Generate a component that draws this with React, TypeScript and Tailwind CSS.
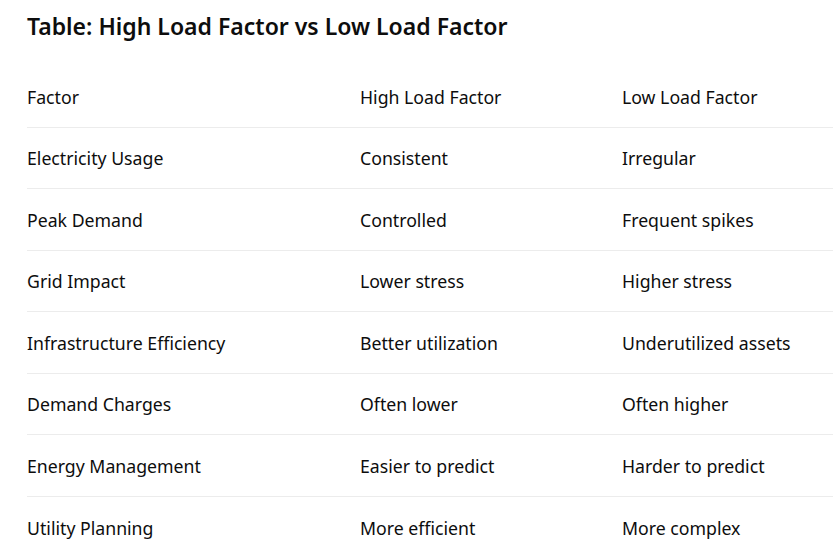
const rows: [string, string, string][] = [
  ["Factor", "High Load Factor", "Low Load Factor"],
  ["Electricity Usage", "Consistent", "Irregular"],
  ["Peak Demand", "Controlled", "Frequent spikes"],
  ["Grid Impact", "Lower stress", "Higher stress"],
  ["Infrastructure Efficiency", "Better utilization", "Underutilized assets"],
  ["Demand Charges", "Often lower", "Often higher"],
  ["Energy Management", "Easier to predict", "Harder to predict"],
  ["Utility Planning", "More efficient", "More complex"],
];

export default function App() {
  return (
    <div className="w-[833px] h-[552px] overflow-hidden bg-white text-[#0d0d0d] font-['Noto_Sans',sans-serif]">
      <h2 className="pl-[27px] pt-[9px] h-[66px] text-[23px] font-semibold leading-[34px]">
        Table: High Load Factor vs Low Load Factor
      </h2>
      <div className="ml-[27px] w-[900px]">
        {rows.map((r, i) => (
          <div
            key={i}
            className={`grid grid-cols-[333px_262px_1fr] items-center h-[61.5px] pt-[2px] text-[17.7px] ${
              i < rows.length - 1 ? "border-b border-[#ececec]" : ""
            }`}
          >
            <span>{r[0]}</span>
            <span>{r[1]}</span>
            <span>{r[2]}</span>
          </div>
        ))}
      </div>
    </div>
  );
}
